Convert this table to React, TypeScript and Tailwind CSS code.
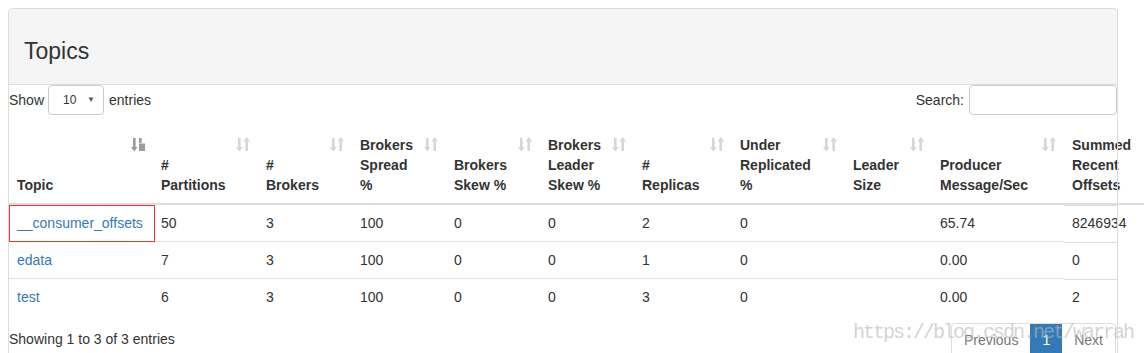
import React from 'react'

type Column = { key: string; lines: string[]; width: string }

const COLUMNS: Column[] = [
  { key: 'topic', lines: ['Topic'], width: 'w-[144px]' },
  { key: 'partitions', lines: ['#', 'Partitions'], width: 'w-[105px]' },
  { key: 'brokers', lines: ['#', 'Brokers'], width: 'w-[94px]' },
  { key: 'spread', lines: ['Brokers', 'Spread', '%'], width: 'w-[94px]' },
  { key: 'skew', lines: ['Brokers', 'Skew %'], width: 'w-[94px]' },
  { key: 'leaderSkew', lines: ['Brokers', 'Leader', 'Skew %'], width: 'w-[94px]' },
  { key: 'replicas', lines: ['#', 'Replicas'], width: 'w-[98px]' },
  { key: 'under', lines: ['Under', 'Replicated', '%'], width: 'w-[113px]' },
  { key: 'leaderSize', lines: ['Leader', 'Size'], width: 'w-[87px]' },
  { key: 'producer', lines: ['Producer', 'Message/Sec'], width: 'w-[132px]' },
  { key: 'offsets', lines: ['Summed', 'Recent', 'Offsets'], width: 'w-[110px]' },
]

const ROWS = [
  ['__consumer_offsets', '50', '3', '100', '0', '0', '2', '0', '', '65.74', '8246934'],
  ['edata', '7', '3', '100', '0', '0', '1', '0', '', '0.00', '0'],
  ['test', '6', '3', '100', '0', '0', '3', '0', '', '0.00', '2'],
]

const SortIcon = ({ active }: { active?: boolean }) => (
  <svg width="14" height="15" viewBox="0 0 14 15" className={active ? 'fill-[#9c9c9c]' : 'fill-[#d6d6d6]'}>
    <rect x="2" y="1" width="2.6" height="9.5" />
    <polygon points="0,10 6.6,10 3.3,14.5" />
    {active ? (
      <>
        <rect x="8" y="1" width="2.6" height="5" />
        <rect x="8" y="6.5" width="6" height="7.5" />
      </>
    ) : (
      <>
        <polygon points="7.4,4.5 14,4.5 10.7,0" />
        <rect x="9.4" y="4.5" width="2.6" height="9.5" />
      </>
    )}
  </svg>
)

const TopicsTable = () => (
  <table className="mt-[12px] table-fixed border-collapse w-[1165px] text-[14px] leading-[20px] text-[#333]">
    <thead>
      <tr>
        {COLUMNS.map((col, i) => (
          <th
            key={col.key}
            className={`${col.width} relative p-[8px] pr-[30px] align-bottom text-left font-bold whitespace-nowrap border-b-2 border-[#ddd]`}
          >
            {col.lines.map((line, j) => (
              <div key={j}>{line}</div>
            ))}
            <span className="absolute top-[10px] right-[8px]">
              <SortIcon active={i === 0} />
            </span>
          </th>
        ))}
      </tr>
    </thead>
    <tbody>
      {ROWS.map((row, r) => (
        <tr key={r}>
          {row.map((cell, c) => {
            const last = c === row.length - 1
            return (
              <td
                key={c}
                className={
                  last
                    ? 'p-[8px] align-top whitespace-nowrap bg-[linear-gradient(#ddd,#ddd)] bg-no-repeat bg-[length:53px_1px] bg-left-top'
                    : 'relative p-[8px] align-top whitespace-nowrap border-t border-[#ddd]'
                }
              >
                {c === 0 ? <a className="text-[#337ab7]">{cell}</a> : cell}
                {c === 0 && r === 0 && (
                  <span className="absolute left-0 top-0 bottom-[-1px] right-[-2px] border border-[#e53935]" />
                )}
              </td>
            )
          })}
        </tr>
      ))}
    </tbody>
  </table>
)

export default function App() {
  return (
    <div className="relative w-[1144px] h-[353px] overflow-hidden bg-white pt-[8px] pl-[8px] font-['Liberation_Sans',Arial,sans-serif] text-[#333]">
      <div className="relative w-[1110px] h-[400px] border border-[#ddd] rounded-t-[4px]">
        <div className="h-[76px] flex items-center px-[15px] bg-[#f5f5f5] border-b border-[#ddd] rounded-t-[3px]">
          <h3 className="text-[23px] leading-[24px] mt-[8px]">Topics</h3>
        </div>

        <div className="flex justify-between items-center h-[30px] text-[14px]">
          <div className="flex items-center">
            <span>Show</span>
            <div className="ml-[4px] mr-[5px] flex items-center justify-between w-[56px] h-[30px] border border-[#ccc] rounded-[4px] pl-[14px] pr-[8px] text-[12px]">
              <span>10</span>
              <span className="text-[8px] text-[#555]">▼</span>
            </div>
            <span>entries</span>
          </div>
          <div className="flex items-center">
            <span>Search:</span>
            <div className="ml-[5px] w-[148px] h-[30px] border border-[#ccc] rounded-[4px]" />
          </div>
        </div>

        <TopicsTable />

        <div className="flex justify-between items-start mt-[8px] text-[14px]">
          <div className="pt-[6px]">Showing 1 to 3 of 3 entries</div>
          <div className="flex border border-[#ddd] rounded-[4px] leading-[20px] mr-[1px]">
            <span className="px-[12px] py-[6px] text-[#777]">Previous</span>
            <span className="px-[12px] py-[6px] bg-[#337ab7] text-white">1</span>
            <span className="px-[12px] py-[6px] text-[#777]">Next</span>
          </div>
        </div>

        <div className="absolute top-0 bottom-0 right-[-1px] w-px bg-[#ddd] z-10" />
      </div>

      <div className="absolute left-[853px] top-[323px] text-[20px] leading-[20px] tracking-[-2px] font-['Liberation_Mono',monospace] text-[#b8b8b8] opacity-60 whitespace-nowrap pointer-events-none">
        https://blog.csdn.net/warrah
      </div>
    </div>
  )
}
